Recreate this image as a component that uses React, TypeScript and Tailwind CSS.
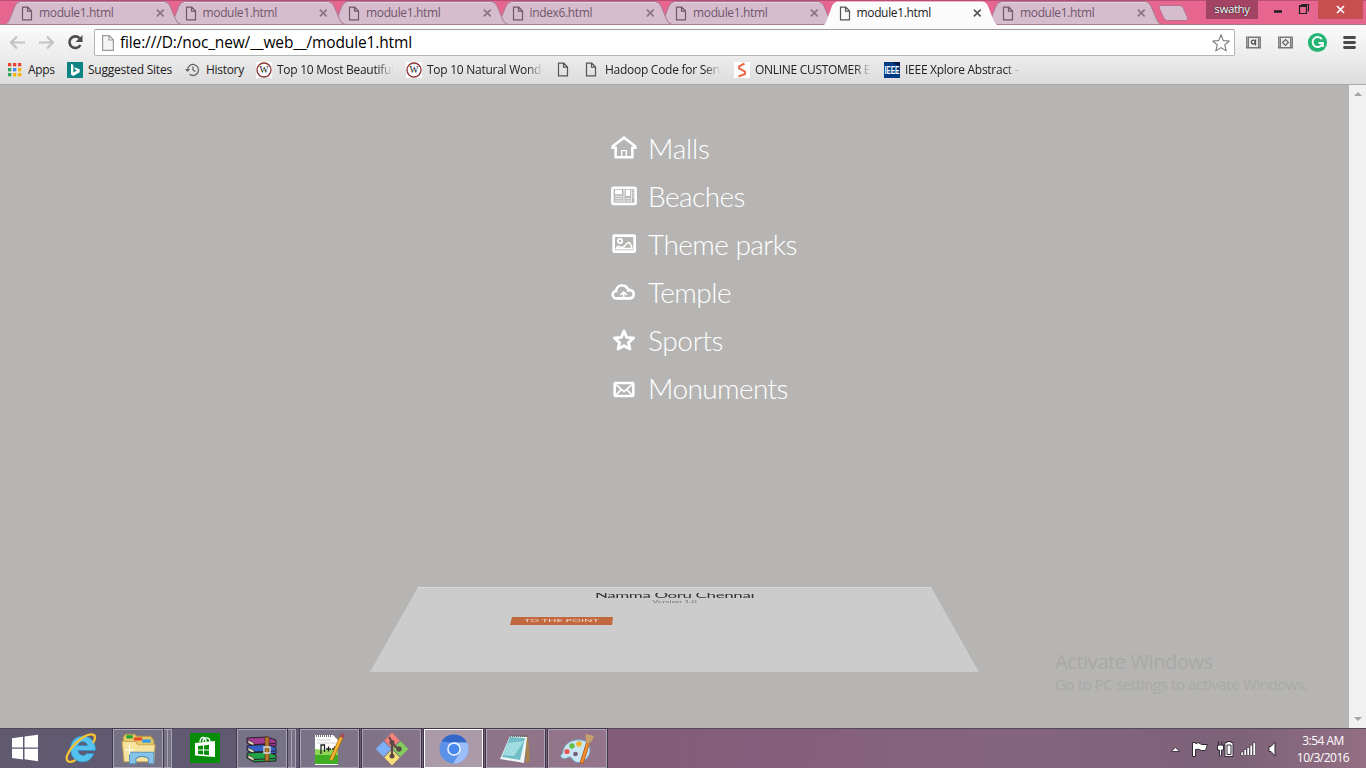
import React from 'react';

const ui = "font-['Open_Sans','Noto_Sans',sans-serif]";

function PageIcon({ color = '#555', fill = 'none' }: { color?: string; fill?: string }) {
  return (
    <svg width="12" height="15" viewBox="0 0 12 15" className="shrink-0">
      <path d="M1.5 1.2h5.3l3.7 3.8v8.8h-9zM6.5 1.2v4h4" fill={fill} stroke={color} strokeWidth="1.2" />
    </svg>
  );
}

function Tab({ title, active }: { title: string; active?: boolean }) {
  return (
    <div className="relative h-[25px] w-[163.5px] shrink-0">
      <svg className="absolute left-0 top-0" width="182" height="26" viewBox="0 0 182 26">
        <path
          d={active ? 'M0 26C5 25 5 22 7 17L11 6Q13 1.500 17 1.500H161Q165 1.500 167 6L172 19Q174 25 179 26Z' : 'M1 24.500C5 24 6 21 8 16L12 6Q14 1.500 18 1.500H161Q165 1.500 167 6L172 18Q174 24 178 24.500Z'}
          fill={active ? '#fbfbfb' : '#d6bdce'}
          stroke={active ? 'none' : '#a97a94'}
        />
        <path d="M17 2.500H162" stroke={active ? '#fff' : '#e4d2de'} />
      </svg>
      <div className={`relative flex h-[26px] items-center pl-[18px] ${active ? 'text-[#222]' : 'text-[#70566a]'}`}>
        <PageIcon color={active ? '#555' : '#70566a'} />
        <span className="ml-[6px] w-[114px] whitespace-nowrap text-[12px] leading-[16px] tracking-[-0.35px]">{title}</span>
        <svg width="15" height="10" viewBox="0 0 15 10" className="ml-[2px]">
          <path d="M5 1.500l7 7M12 1.500l-7 7" stroke={active ? '#555' : '#8c7284'} strokeWidth="1.700" />
        </svg>
      </div>
    </div>
  );
}

const tabs = ['module1.html', 'module1.html', 'module1.html', 'index6.html', 'module1.html', 'module1.html', 'module1.html'];
const layers = ['z-[7]', 'z-[6]', 'z-[5]', 'z-[4]', 'z-[3]', 'z-[10]', 'z-[1]'];

function TabStrip() {
  return (
    <div className="relative flex h-[25px] border-t border-[#b94f74] bg-[#e6668f]">
      <div className="-mt-px flex w-[1152px] pl-[3px]">
        {tabs.map((t, i) => (
          <div key={i} className={`relative ${layers[i]}`}>
            <Tab title={t} active={i === 5} />
          </div>
        ))}
      </div>
      <svg width="54" height="24" viewBox="0 0 54 24" className="shrink-0">
        <path d="M7.500 4.500h20q3 0 4 3l4 9q1 3-2 3h-18q-3 0-4-3l-4-9q-1-3 0-3z" fill="#d6bdce" stroke="#b6708f" />
      </svg>
      <div className="-mt-px h-[19px] w-[52px] bg-[#a44464] pt-px text-center text-[11.5px] leading-[16px] text-white [text-shadow:0_0_1px_#222,0_0_1px_#222] tracking-[-0.4px]">swathy</div>
      <svg width="60" height="20" viewBox="0 0 60 20">
        <path d="M16 10.500h8" stroke="#222" strokeWidth="2.600" />
        <path d="M41.500 5h7v7.500h-7zM43.500 3.500h7v7" fill="none" stroke="#222" strokeWidth="1.200" />
        <path d="M41 5h8" stroke="#222" strokeWidth="2" />
      </svg>
      <div className="-mt-px flex h-[19px] w-[45px] items-center justify-center bg-[#c84f50]">
        <svg width="9" height="9" viewBox="0 0 9 9"><path d="M1 1l7 7M8 1L1 8" stroke="#fff" strokeWidth="1.700" /></svg>
      </div>
      <div className="absolute bottom-0 left-0 h-px w-full bg-[#a9768f]" />
    </div>
  );
}

function Toolbar() {
  return (
    <div className="flex h-[34px] bg-linear-to-b from-[#fbfbfb] to-[#ebebeb]">
      <svg width="94" height="34" viewBox="0 0 94 34" className="shrink-0" fill="none">
        <path d="M25 17.500H11.500M17 11.500l-6 6 6 6M39 17.500h13.500M47 11.500l6 6-6 6" stroke="#c3c3c3" strokeWidth="2.200" />
        <path d="M79.500 13.200A5.800 5.800 0 1 0 80.400 20" stroke="#4c4c4c" strokeWidth="2.600" />
        <path d="M82.500 10v7h-7z" fill="#4c4c4c" />
      </svg>
      <div className="mt-[4px] flex h-[27px] w-[1141px] items-center rounded-[2px] border border-[#b5b5b5] border-t-[#9f9f9f] bg-white pl-[7px]">
        <svg width="12" height="16" viewBox="0 0 12 16" className="shrink-0">
          <path d="M.6.6h6.700l4.100 4.200v10.600H.6zM7 .6V5h4.400" fill="#f5f5f5" stroke="#9a9a9a" strokeWidth="1.200" />
        </svg>
        <span className="ml-[6px] grow whitespace-nowrap pb-px text-[15.5px] leading-[20px] tracking-[-0.14px] text-black">file:///D:/noc_new/__web__/module1.html</span>
        <svg width="20" height="20" viewBox="0 0 20 20" className="mr-[3px]">
          <path d="M10 1.700l2.300 5.900 6 .4-4.600 3.900 1.500 6-5.200-3.300-5.200 3.300 1.500-6L1.700 8l6-.4z" fill="#fff" stroke="#777" strokeWidth="1.100" strokeLinejoin="round" />
        </svg>
      </div>
      <svg width="131" height="34" viewBox="0 0 131 34" className="shrink-0" fill="none">
        {[11, 43].map((x) => (
          <g key={x}>
            <path d={`M${x} 11.500h15v12h-15z`} fill="#777" />
            <path d={`M${x + 1.3} 12.500v10M${x + 13.700} 12.500v10`} stroke="#ddd" strokeWidth="1" strokeDasharray="1 1" />
            <rect x={x + 3} y="13" width="9" height="9" fill="#eee" />
          </g>
        ))}
        <circle cx="18.300" cy="17" r="1.900" stroke="#555" strokeWidth="1.400" /><path d="M20.500 14.500v6" stroke="#555" strokeWidth="1.300" />
        <path d="M50.500 14.500l3 3-3 3-3-3z" stroke="#666" strokeWidth="1.200" />
        <circle cx="82.500" cy="17.500" r="9.600" fill="#24b574" />
        <path d="M86.800 14.300A5 5 0 1 0 87 19.500M83.500 18h4.300v4" stroke="#fff" strokeWidth="1.900" />
        <path d="M109.500 12.500h10M109.500 17.500h10M109.500 22.500h10" stroke="#4a4a4a" strokeWidth="2.800" strokeLinecap="round" />
      </svg>
    </div>
  );
}

function Wiki() {
  return (
    <svg width="16" height="16" viewBox="0 0 16 16">
      <rect width="16" height="16" fill="#fff" />
      <circle cx="8" cy="8" r="7" fill="#fff" stroke="#8b3437" strokeWidth="1.300" />
      <text x="8" y="11.300" textAnchor="middle" fontFamily="Liberation Serif, serif" fontSize="9.500" fill="#222">W</text>
    </svg>
  );
}

const appColors = ['#ea4335', '#ea4335', '#ea4335', '#34a060', '#4285f4', '#f4b400', '#34a060', '#f4b400', '#f4b400'];

const marks = [
  { w: 'w-[59px]', gap: 'gap-[6px]', t: 'Apps', tw: 'w-[32px]', fade: false, track: 'tracking-[-0.3px]', icon: <svg width="14" height="14" viewBox="0 0 14 14">{appColors.map((c, i) => <rect key={i} x={(i % 3) * 5} y={Math.floor(i / 3) * 5} width="3.300" height="3.300" fill={c} />)}</svg> },
  { w: 'w-[118px]', gap: 'gap-[5px]', t: 'Suggested Sites', tw: 'w-[90px]', fade: false, track: 'tracking-[-0.22px]', icon: <svg width="16" height="16" viewBox="0 0 16 16"><path fill="#0c8484" d="M0 0h16v16H0z" /><path d="M4 2l2.300.8v7.700L10 8.500 8 7.600 7 5.200l5.700 2v3L6.200 14 4 12.500z" fill="#fff" /></svg> },
  { w: 'w-[71px]', gap: 'gap-[6px]', t: 'History', tw: 'w-[45px]', fade: false, track: 'tracking-[-0.3px]', icon: <svg width="15" height="14" viewBox="0 0 15 14" fill="none"><path d="M2.500 7a5.500 5.500 0 1 1 2 4.200M8 3.500V7l2.500 1.500" stroke="#666" strokeWidth="1.300" /><path d="M0 6h5.200L2.600 9z" fill="#666" /></svg> },
  { w: 'w-[150px]', gap: 'gap-[5px]', t: 'Top 10 Most Beautiful', tw: 'w-[116px]', fade: true, track: 'tracking-[-0.27px]', icon: <Wiki /> },
  { w: 'w-[151px]', gap: 'gap-[5px]', t: 'Top 10 Natural Wonders', tw: 'w-[116px]', fade: true, track: 'tracking-[-0.27px]', icon: <Wiki /> },
  { w: 'w-[28px]', gap: 'gap-[5px]', t: '', tw: 'w-0', fade: false, track: 'tracking-normal', icon: <PageIcon /> },
  { w: 'w-[149px]', gap: 'gap-[8px]', t: 'Hadoop Code for Server', tw: 'w-[116px]', fade: true, track: 'tracking-[-0.27px]', icon: <PageIcon /> },
  { w: 'w-[150px]', gap: 'gap-[5px]', t: 'ONLINE CUSTOMER EX', tw: 'w-[116px]', fade: true, track: 'tracking-[-0.3px]', icon: <svg width="16" height="16" viewBox="0 0 16 16"><path fill="#fff" d="M0 0h16v16H0z" /><path d="M10.500 1.500L5 4.500v2l6 3v2.500L4.500 14.500" fill="none" stroke="#ed6b47" strokeWidth="2" /></svg> },
  { w: 'w-[140px]', gap: 'gap-[5px]', t: 'IEEE Xplore Abstract -', tw: 'w-[116px]', fade: true, track: 'tracking-[-0.27px]', icon: <svg width="16" height="16" viewBox="0 0 16 16"><path fill="#003c83" d="M0 0h16v16H0z" /><path fill="#001a4c" d="M8 0h8v5z" /><text x="8" y="11.500" textAnchor="middle" textLength="15" lengthAdjust="spacingAndGlyphs" fontFamily="Liberation Sans, sans-serif" fontSize="10" fontWeight="bold" fill="#fff">IEEE</text></svg> },
];

function Bookmarks() {
  return (
    <div className="flex h-[26px] items-center border-b border-[#a9a9a9] bg-linear-to-b from-[#ebebeb] to-[#dcdcdc] pb-[4px] pl-[8px] text-[12px] text-[#222]">
      {marks.map((m, i) => (
        <div key={i} className={`flex shrink-0 items-center ${m.gap} ${m.w}`}>
          {m.icon}
          <span className={`shrink-0 overflow-hidden whitespace-nowrap leading-[17px] ${m.tw} ${m.track} ${m.fade ? 'mask-r-from-86% mask-r-to-100%' : ''}`}>{m.t}</span>
        </div>
      ))}
    </div>
  );
}

const menu = [
  { t: 'Malls', track: 'tracking-[-0.2px]', icon: <><path d="M8 34L42 8l34 26v4H67v29H17V38H8z" strokeWidth="7.500" /><path d="M35 68V47h14v21" strokeWidth="4" /></> },
  { t: 'Beaches', track: 'tracking-[-0.55px]', icon: <><rect x="7" y="14" width="70" height="49" rx="3" strokeWidth="7.500" /><path d="M42 15v46M14 40h24M14 47h24M14 54h24M47 47h14M47 54h14M64 20v38M68 22h6M68 29h6M68 36h6M68 43h6" strokeWidth="2.500" /><path d="M15 20h21v14H15zM47 20h13v19H47z" fill="#fff" stroke="none" /></> },
  { t: 'Theme parks', track: 'tracking-[-0.55px]', icon: <><rect x="11" y="14" width="63" height="48" rx="2" strokeWidth="8" /><circle cx="30" cy="30" r="6.500" strokeWidth="5" /><path d="M19 53q3-9 10-6 5 5 13 0 12-16 17-11 5 6 7 17z" strokeWidth="5" /></> },
  { t: 'Temple', track: 'tracking-[-0.5px]', icon: <><path d="M20 58a11 11 0 0 1-2-22C20 24 29 18 38 19q13 1 17 15c9-2 17 3 16 12q-1 12-13 12z" strokeWidth="8" /><path d="M41 57V39M31 48l10-9 10 9" strokeWidth="5" /></> },
  { t: 'Sports', track: 'tracking-[-0.35px]', icon: <path d="M42 12l8 19 21 2-16 14 5 19-18-10-18 10 5-19L13 33l21-2z" strokeWidth="8.500" strokeLinejoin="round" /> },
  { t: 'Monuments', track: 'tracking-[-0.6px]', icon: <><rect x="14" y="24" width="56" height="39" rx="2" strokeWidth="7.500" /><path d="M18 29l24 21 24-21M18 60l16-17M66 60L50 43" strokeWidth="5" /></> },
];

function Page() {
  return (
    <div className="relative grow overflow-hidden bg-[#b6b5b3]">
      <ul className="mt-[40px] ml-[610px] w-[240px]">
        {menu.map((m) => (
          <li key={m.t} className="flex h-[48px] items-center">
            <svg width="28" height="28" viewBox="0 0 84 84" fill="none" stroke="#fff">{m.icon}</svg>
            <span className={`ml-[10px] whitespace-nowrap pb-[2px] font-[Lato] text-[28px] leading-[36px] font-light text-white ${m.track}`}>{m.t}</span>
          </li>
        ))}
      </ul>
      <div className="mt-[174px] ml-[370px] h-[85px] w-[609px] bg-[#cccccc] [clip-path:polygon(48px_0,561px_0,609px_100%,0_100%)]">
        <div className="flex flex-col items-center border-t border-[#d8d8d8] pt-[5px]">
          <div className="flex h-[6px] items-center justify-center overflow-hidden">
            <span className="block shrink-0 whitespace-nowrap font-[Lato] text-[17px] leading-[18px] tracking-[-0.4px] text-[#333] [transform:scaleY(0.4)]">Namma Ooru Chennai</span>
          </div>
          <div className="flex h-[5px] items-center justify-center">
            <span className="block shrink-0 whitespace-nowrap font-[Lato] text-[9px] leading-[10px] text-[#777] [transform:scaleY(0.35)]">Version 1.0</span>
          </div>
        </div>
        <div className="mt-[13px] ml-[140px] flex h-[8px] w-[103px] items-center justify-center overflow-hidden bg-[#c1683f] [clip-path:polygon(2px_0,103px_0,102px_100%,0_100%)]">
          <span className="block shrink-0 whitespace-nowrap font-[Lato] text-[11px] leading-[12px] text-[#f0d8cc] [transform:scaleY(0.3)]">TO THE POINT</span>
        </div>
      </div>
      <div className="absolute left-[1055px] top-[564px] whitespace-nowrap text-[#a9a8a6]">
        <div className="text-[20px] leading-[26px] tracking-[-0.4px]">Activate Windows</div>
        <div className="text-[15px] leading-[19px] tracking-[-0.38px]">Go to PC settings to activate Windows.</div>
      </div>
    </div>
  );
}

function Slot({ children, active, stack, width }: { children: React.ReactNode; active?: boolean; stack?: boolean; width: string }) {
  return (
    <div className={`flex h-[40px] pt-px ${width}`}>
      <div className={`flex h-[39px] grow items-center justify-center border outline outline-[#40384a] ${active ? 'border-white bg-[#ab9ba9]' : 'border-[#aaa3b3] bg-white/15'}`}>{children}</div>
      {stack && <div className="ml-px h-[39px] w-[4px] border-y border-r border-[#aaa3b3] bg-white/15" />}
      {stack && <div className="h-[39px] w-[4px] border-y border-r border-[#aaa3b3] bg-white/15" />}
    </div>
  );
}

function Taskbar() {
  return (
    <div className="flex h-[40px] border-t border-[#514a5b] bg-[linear-gradient(to_right,#5f5a70_0,#5f5a72_280px,#6f5c74_400px,#805c74_560px,#845d7b_700px,#85647f_1000px,#7d6278_1240px,#936f83_1366px)]">
      <svg width="113" height="40" viewBox="0 0 113 40" className="-mt-px shrink-0">
        <path d="M12 10.200l11-1.500v10.700H12zM24.500 8.500L38 6.800v12.600H24.500zM12 20.800h11v10.600l-11-1.500zM24.500 20.800H38v12.400l-13.500-1.900z" fill="#fff" />
        <path d="M94 25.500c-2 5-6 8.500-11.500 8.500-7 0-12-5.500-12-13s5-13 12.500-13S96 14 95.500 22.500H78c.5 5 6.500 6.500 8.500 3zM78 17.500h9.500c-.8-5-8.500-5.200-9.500 0z" fill="#54c1ee" stroke="#2a8fcb" strokeWidth=".7" />
        <path d="M93 15c3-5 2.500-8-.5-8.500-5-1-12 4-18 10-7 7-10 15-6 17 2 .9 5-.2 7-1.500" fill="none" stroke="#f7c32f" strokeWidth="2.300" />
      </svg>
      <div className="-mt-px flex">
        <Slot width="w-[59px]" stack>
          <svg width="36" height="34" viewBox="1 0 34 32">
            <path d="M4 5l2-3h9l2 2h13l3 4v19H5z" fill="#e6c86c" stroke="#b39540" />
            <path d="M7 3h6v3H7z" fill="#1ca52e" /><path d="M14 5h8v3h-8z" fill="#e94b29" /><path d="M22 7h8v3h-8z" fill="#2e9be5" />
            <path d="M3 9h13l2 3h16l-1 16H5z" fill="#f6e39e" stroke="#c9aa55" />
            <path d="M10 30V19h23v11h-5v-5q-6-4-12 0v5z" fill="#86c3e8" stroke="#5a95bd" />
            <path d="M10 12v9M6 17h8" stroke="#fff" />
          </svg>
        </Slot>
      </div>
      <div className="-mt-px flex h-[40px] w-[65px] items-center justify-center">
        <svg width="30" height="30" viewBox="0 0 30 30"><path fill="#078c08" d="M0 0h30v30H0z" /><path d="M5 10l20-2v16l-20-1.500z" fill="#fff" /><path d="M10 9c0-6 6-6 6 0M13 9c0-5 7-6 7 0" fill="none" stroke="#fff" strokeWidth="1.400" /><path d="M8 13l5-.5v4H8zm6-.6l5-.6v4.700h-5zM8 17.500h5v4L8 21zm6 0h5v4.700l-5-.6z" fill="#078c08" /></svg>
      </div>
      <div className="-mt-px flex">
        <Slot width="w-[59px]" stack>
          <svg width="34" height="28" viewBox="0 0 34 28">
            {['#a33a91', '#3361c5', '#22a345'].map((c, i) => <g key={c} transform={`translate(0 ${i * 7.5})`}><path d="M2 3l20-1 9 3v6L9 12 2 8z" fill={c} stroke="#29202d" /><path d="M3 5l6 3v3L3 8z" fill="#e6dfbd" stroke="#222" strokeWidth=".6" /><path d="M9 9.500l21-1" stroke="#29202d" strokeWidth="1" /></g>)}
            <path d="M20 2h4v24h-4z" fill="#b77a2c" stroke="#523511" strokeWidth=".7" /><path d="M19 12h6v6h-6z" fill="none" stroke="#ddd" strokeWidth="1.300" />
          </svg>
        </Slot>
      </div>
      <div className="-mt-px ml-[4px] flex gap-[3px]">
        <Slot width="w-[59px]">
          <svg width="36" height="34" viewBox="2 0 36 34"><path d="M5 3h18l5 5v25H5z" fill="#fff" /><path d="M5 17q12 2 23-1v16H5z" fill="#8fd655" /><path d="M5 23h23v9H5z" fill="#3fae25" /><path d="M7 8h14M7 11h19" stroke="#ccc" /><path d="M6 4h16" stroke="#777" strokeWidth="2" strokeDasharray="1 1" /><path d="M11 22v-9h3.500v7M16 17h5M18.500 14.500v5M22 17h5M24.500 14.500v5" fill="none" stroke="#222" strokeWidth="1.300" /><path d="M32 4L21 28" stroke="#a96b12" strokeWidth="4" /><path d="M32 4L21 28" stroke="#f4b52e" strokeWidth="2.500" /><path d="M33 2l-1.500 3.500" stroke="#a44b57" strokeWidth="4" /></svg>
        </Slot>
        <Slot width="w-[59px]">
          <svg width="34" height="34" viewBox="0 0 34 34"><g transform="rotate(45 17 17)" strokeLinejoin="round"><path d="M6 6h10v10H6z" fill="#f6807d" stroke="#f6807d" /><path d="M18 6h10v10H18z" fill="#83cf5a" stroke="#83cf5a" /><path d="M6 18h10v10H6z" fill="#7eaef6" stroke="#7eaef6" /><path d="M18 18h10v10H18z" fill="#fbe176" stroke="#fbe176" /></g><path d="M14 5l3 5v14M17 11l6 6" fill="none" stroke="#5b4a47" strokeWidth="2" /><circle cx="17" cy="10.500" r="2.500" fill="#5b4a47" /><circle cx="24" cy="17" r="2.700" fill="#5b4a47" /><circle cx="17" cy="24" r="2.500" fill="#5b4a47" /></svg>
        </Slot>
        <Slot width="w-[59px]" active>
          <svg width="30" height="30" viewBox="0 0 30 30"><circle cx="15" cy="15" r="14.500" fill="#5c91e8" /><path d="M2.500 7.500A14.500 14.500 0 0 1 28 8.500H15z" fill="#3267c8" /><path d="M28 8.500A14.500 14.500 0 0 1 14 29.500l7-11-6-10z" fill="#9bbef8" /><circle cx="15" cy="15" r="6.800" fill="#f3f7ff" /><circle cx="15" cy="15" r="5.300" fill="#4688ee" /></svg>
        </Slot>
        <Slot width="w-[59px]">
          <svg width="34" height="32" viewBox="1 0 34 32"><path d="M26 4h4l2 24-4 2z" fill="#a5844f" /><path d="M12 3l17 1-3 26-24-4z" fill="#eef6f6" /><path d="M12 4l15 1-5 22L4 24z" fill="#71bec9" /><path d="M10 10l16-2-10 15-11-1z" fill="#a1dce2" /><path d="M12 3h17" stroke="#5c6666" strokeWidth="2" strokeDasharray="1 1" /></svg>
        </Slot>
        <Slot width="w-[59px]">
          <svg width="36" height="34" viewBox="1 0 36 34"><path d="M5 16C8 9 18 6 26 9c7 3 6 14 1 18-6 5-11 4-13 1s-3-4-6-2-8-1-6-3c3-2 1-4 3-7z" fill="#cae6f4" stroke="#6fa4c0" /><circle cx="8" cy="19.500" r="2.600" fill="#e8524f" /><circle cx="13" cy="14" r="2.700" fill="#65bb46" /><circle cx="20" cy="12" r="2.800" fill="#f2b42c" /><circle cx="16.500" cy="22" r="2.300" fill="#745f78" /><path d="M29 11l-6 19" stroke="#a45816" strokeWidth="4" strokeLinecap="round" /><path d="M29 11l-6 19" stroke="#ed8b2f" strokeWidth="2.500" strokeLinecap="round" /><path d="M27 10c0-4-1-6 0-8l8 2c-1 3-2 6-6 8z" fill="#c9a06c" /></svg>
        </Slot>
      </div>
      <div className="grow" />
      <svg width="120" height="38" viewBox="0 0 120 38" className="mr-[16px] shrink-0" strokeWidth="1">
        <path d="M11 22.500l4.500-4 4.500 4z" fill="#fff" stroke="#4c3c4e" />
        <path d="M32.500 13.500h3v1q3-2 6 1h6l-2 6h-4q-3-2-6-1v7h-3z" fill="#fff" stroke="#332a35" />
        <path d="M57.500 16h6v5h-2v6h-2v-6h-2zM58.500 12.500v4M62 12.500v4" fill="#fff" stroke="#332a35" /><path d="M65 13.500h2v-1h4v1h2v14h-8z" fill="#fff" stroke="#332a35" /><path d="M67 16h4v9.500h-4z" fill="#fff" stroke="#332a35" />
        {[0, 1, 2, 3, 4].map((i) => <rect key={i} x={81 + i * 3} y={23 - i * 2.300} width="2.600" height={3.500 + i * 2.300} fill="#fff" stroke="#332a35" strokeWidth=".6" />)}
        <path d="M109 17.500h2l4-4.500v14l-4-4.500h-2z" fill="#fff" stroke="#332a35" />
      </svg>
      <div className="mr-[16px] flex w-[54px] flex-col items-center whitespace-nowrap pt-[4px] text-[12px] leading-[16.500px] tracking-[-0.5px] text-white">
        <div>3:54 AM</div>
        <div>10/3/2016</div>
      </div>
    </div>
  );
}

export default function App() {
  return (
    <div className={`flex h-[768px] w-[1366px] flex-col overflow-hidden ${ui}`}>
      <TabStrip />
      <Toolbar />
      <Bookmarks />
      <div className="flex min-h-0 grow">
        <Page />
        <div className="flex w-[17px] flex-col items-center justify-between bg-[#f1f1f1] py-[6px]">
          <svg width="8" height="6" viewBox="0 0 8 6"><path d="M0 5l4-4 4 4z" fill="#a3a3a3" /></svg>
          <svg width="8" height="6" viewBox="0 0 8 6"><path d="M0 1l4 4 4-4z" fill="#a3a3a3" /></svg>
        </div>
      </div>
      <Taskbar />
    </div>
  );
}
